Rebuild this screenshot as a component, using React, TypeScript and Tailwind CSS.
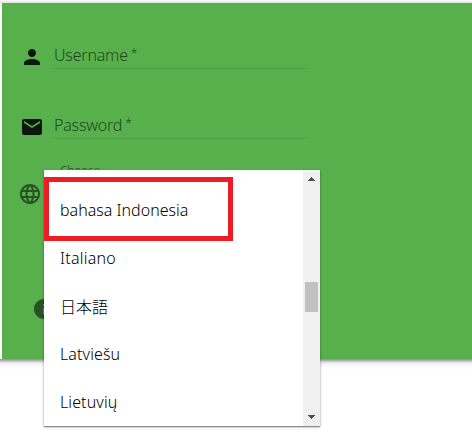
import { MdEmail, MdInfo, MdLanguage, MdPerson } from "react-icons/md";
import type { ReactNode } from "react";

const languages = [
  { name: "bahasa Indonesia", style: "pb-0.5 tracking-[0.01px]" },
  { name: "Italiano", style: "pb-0.5 tracking-[0.25px]" },
  { name: "日本語", style: "" },
  { name: "Latviešu", style: "pb-0.5 tracking-[0.1px]" },
  { name: "Lietuvių", style: "pb-0.5 tracking-[0.1px]" },
];

function Field({ icon, label, tracking }: { icon: ReactNode; label: string; tracking: string }) {
  return (
    <div className="flex h-[70px] pl-[18px]">
      <div className="w-[34px] pt-0.5 text-[#0c170b]">{icon}</div>
      <div className="flex h-[26px] w-[252px] items-start gap-[3px] border-b border-[#4c9a42] leading-6 font-light text-[#1f4a1b]">
        <span className={`text-base leading-6 whitespace-nowrap ${tracking}`}>{label}</span>
        <span className="-mt-px text-xs leading-6">*</span>
      </div>
    </div>
  );
}

function LanguageMenu() {
  return (
    <div
      role="listbox"
      className="absolute top-[170px] left-[44px] flex h-[256px] w-[276px] bg-white shadow-[0_1px_1px_rgba(0,0,0,0.35),0_1px_3px_rgba(0,0,0,0.25)]"
    >
      <ul className="h-full flex-1 overflow-hidden pt-[17px]">
        {languages.map(({ name, style }) => (
          <li
            key={name}
            className={`flex h-12 items-center pl-4 text-base font-light whitespace-nowrap text-black ${style}`}
          >
            {name}
          </li>
        ))}
      </ul>
      <div className="flex w-[17px] flex-col items-center bg-[#f0f0f0] pt-[7px] pb-[7px]">
        <svg width="7" height="4" viewBox="0 0 7 4" fill="#505050" shapeRendering="crispEdges">
          <path d="M3 0h1v1h1v1h1v1h1v1H0V3h1V2h1V1h1z" />
        </svg>
        <div className="mt-[101px] h-[30px] w-[13px] bg-[#c1c1c1]" />
        <svg className="mt-auto" width="7" height="4" viewBox="0 0 7 4" fill="#505050" shapeRendering="crispEdges">
          <path d="M0 0h7v1H6v1H5v1H4v1H3V3H2V2H1V1H0z" />
        </svg>
      </div>
      <div className="absolute top-[7px] left-0 h-[64px] w-[189px] border-[5px] border-[#ee1c25]" />
    </div>
  );
}

export default function App() {
  return (
    <div className="relative h-[442px] w-[472px] overflow-hidden bg-white pt-[3px] font-['Noto_Sans','Noto_Sans_CJK_JP',sans-serif]">
      <div className="-mr-5 -ml-5 h-[356px] border-l-[22px] border-white bg-[#57b04c] pt-10 shadow-[0_2px_2px_rgba(0,0,0,0.24),0_1px_5px_rgba(0,0,0,0.26),0_3px_8px_rgba(0,0,0,0.12)]">
        <Field icon={<MdPerson size={24} />} label="Username" tracking="tracking-[-0.2px]" />
        <Field icon={<MdEmail size={24} />} label="Password" tracking="tracking-[-0.2px]" />
        <div className="flex h-[116px] pl-4 text-[#285223]">
          <MdLanguage size={24} className="mt-[-1px]" />
          <span className="mt-[-20px] ml-[18px] text-xs leading-4 font-light tracking-[-0.2px] text-[#1f4a1b]">
            Choose
          </span>
        </div>
        <div className="pl-[30px] text-[#285223]">
          <MdInfo size={24} className="mt-[-2px]" />
        </div>
      </div>
      <LanguageMenu />
    </div>
  );
}
